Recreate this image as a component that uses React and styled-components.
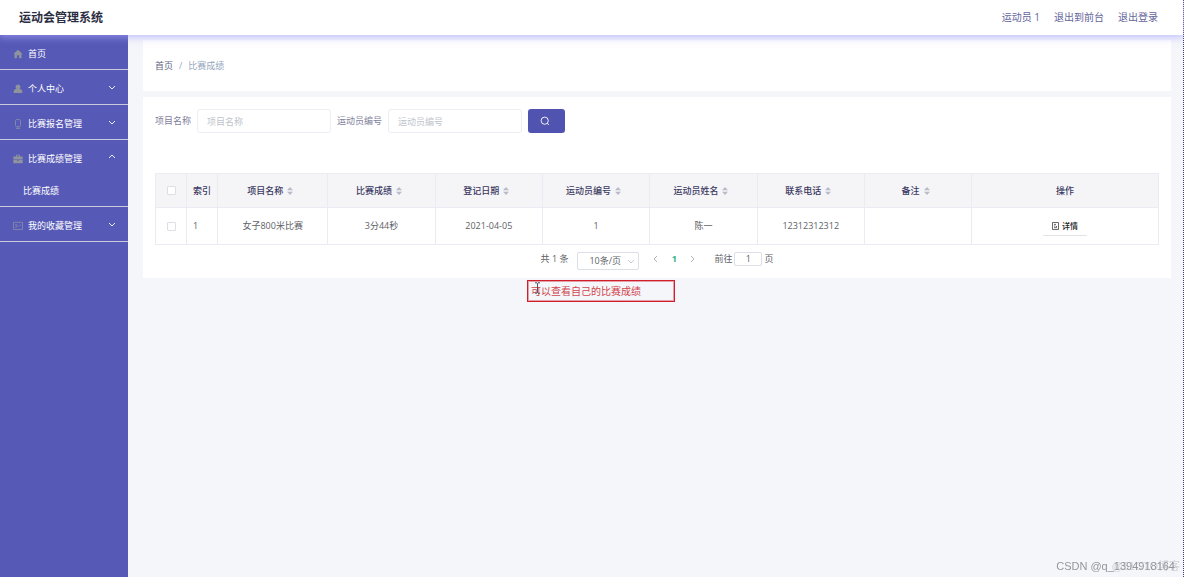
import React from 'react';
import styled, { createGlobalStyle } from 'styled-components';

const GlobalStyle = createGlobalStyle`
* {
box-sizing: border-box;
}
body {
margin: 0;
background: #f5f6fa;
}
body, button, input, select {
font-family: 'Open Sans', 'Noto Sans CJK SC', sans-serif;
font-size: 9px;
line-height: 16px;
color: #606266;
}
a {
color: inherit;
text-decoration: none;
}
`;
const StyledPage = styled.div`
display: flex;
flex-direction: column;
min-height: 100vh;
border-right: 1px dotted #3d3a78;
`;
const StyledHeader = styled.header`
position: relative;
z-index: 1;
display: flex;
align-items: center;
justify-content: space-between;
height: 35px;
padding: 0 25px 0 19px;
background: #fff;
box-shadow: 0 1px 8px 1px rgba(165, 165, 255, 0.7);
`;
const StyledTitle = styled.h1`
margin: 0;
font-size: 12px;
font-weight: 700;
color: #2b2d42;
`;
const StyledUserNav = styled.nav`
display: flex;
gap: 14px;
padding-bottom: 2px;
font-size: 10px;
color: #65659a;
`;
const StyledBody = styled.div`
display: flex;
flex: 1;
`;
const StyledSidebar = styled.aside`
flex: 0 0 128px;
background: #5659b6;
color: #fff;
`;
const StyledMenu = styled.ul`
margin: 0;
padding: 0;
list-style: none;
`;
const StyledMenuItem = styled.li`
border-bottom: 1px solid #c9cadb;
`;
const StyledMenuLink = styled.a`
display: flex;
align-items: center;
gap: 5px;
height: 34px;
padding: 3px 12px 0 13px;
`;
const StyledMenuLabel = styled.span`
flex: 1;
`;
const StyledMenuArrow = styled.span`
display: flex;
padding-bottom: 4px;
`;
const StyledSubLink = styled.a`
display: block;
height: 32px;
padding: 9px 0 7px 23px;
`;
const StyledMain = styled.main`
flex: 1;
min-width: 0;
padding: 5px 12px 0 15px;
`;
const StyledBreadcrumb = styled.nav`
display: flex;
align-items: center;
gap: 6px;
height: 51px;
padding: 0 12px;
background: #fff;
color: #97a8be;
`;
const StyledCrumb = styled.a`
color: #606280;
`;
const StyledCard = styled.section`
margin-top: 6px;
padding: 12px 12px 8px;
background: #fff;
`;
const StyledForm = styled.form`
display: flex;
align-items: center;
gap: 6px;
margin-bottom: 40px;
`;
const StyledLabel = styled.label`
display: flex;
align-items: center;
gap: 6px;
color: #7e809b;
`;
const StyledInput = styled.input`
width: 134px;
height: 24px;
padding: 0 9px;
border: 1px solid #eceef3;
border-radius: 3px;
outline: none;
&::placeholder {
color: #c0c4cc;
}
`;
const StyledSearchButton = styled.button`
display: flex;
align-items: center;
justify-content: center;
width: 37px;
height: 24px;
padding: 0 3px 0 0;
border: 0;
border-radius: 3px;
background: #5153b0;
color: #fff;
`;
const StyledTable = styled.table`
width: 100%;
table-layout: fixed;
border-collapse: collapse;
text-align: center;
`;
const StyledCol = styled.col`
width: ${({ width }) => width};
`;
const StyledTh = styled.th`
height: 34px;
padding: 0;
border: 1px solid #ebecf3;
background: #f5f5f8;
font-weight: 500;
color: #3b3961;
`;
const StyledTd = styled.td`
height: 37px;
padding: ${({ $index }) => ($index ? '0 0 0 6px' : '0')};
border: 1px solid #ebecf3;
text-align: ${({ $index }) => ($index ? 'left' : 'center')};
`;
const StyledHeadCell = styled.div`
display: flex;
align-items: center;
justify-content: center;
gap: 4px;
padding-right: 5px;
`;
const StyledCheckbox = styled.input`
appearance: none;
display: block;
width: 9px;
height: 9px;
margin: 0 auto;
border: 1px solid #dcdfe6;
border-radius: 1px;
background: #fff;
`;
const StyledDetailButton = styled.button`
display: inline-flex;
align-items: center;
gap: 3px;
height: 20px;
padding: 0 9px;
border: 0;
border-bottom: 1px solid #e4e4e8;
background: #fff;
font-size: 8px;
font-weight: 500;
color: #222;
`;
const StyledPagination = styled.div`
display: flex;
align-items: flex-start;
justify-content: center;
padding-top: 6px;
`;
const StyledSelectWrapper = styled.div`
position: relative;
margin: 1px 8px 0 9px;
`;
const StyledSelect = styled.select`
appearance: none;
display: block;
width: 62px;
height: 18px;
padding: 0 11px;
border: 1px solid #dcdfe6;
border-radius: 2px;
background: #fff;
`;
const StyledSelectArrow = styled.span`
position: absolute;
top: 5px;
right: 4px;
display: flex;
color: #c0c4cc;
pointer-events: none;
`;
const StyledPageButton = styled.button`
display: flex;
align-items: center;
justify-content: center;
width: 18px;
height: 16px;
padding: 0;
border: 0;
background: none;
font-weight: 700;
color: ${({ $active }) => ($active ? '#2fb186' : '#a8abb2')};
`;
const StyledJumper = styled.label`
display: flex;
align-items: center;
gap: 2px;
margin-left: 13px;
`;
const StyledPageInput = styled.input`
width: 28px;
height: 14px;
padding: 0;
border: 1px solid #dcdfe6;
border-radius: 2px;
text-align: center;
`;
const StyledNote = styled.p`
position: relative;
width: 148px;
margin: 2px 0 0 384px;
padding: 2px 3px;
border: 1px solid #cf1f2a;
outline: 1px solid rgba(207, 31, 42, 0.4);
outline-offset: -2px;
font-size: 10px;
line-height: 16px;
color: #d0454b;
`;
const StyledCursor = styled.svg`
position: absolute;
top: 1px;
left: 6px;
`;
const StyledWatermark = styled.div`
position: fixed;
right: 9px;
bottom: 3px;
font-family: 'Liberation Sans', 'Noto Sans CJK SC', sans-serif;
font-size: 11px;
color: #96979c;
`;
const StyledFaintMark = styled.span`
position: absolute;
top: 0;
right: -5px;
color: rgba(150, 150, 158, 0.4);
white-space: nowrap;
`;

const Chevron = ({ d = 'M1 3l3 3 3-3' }) => (
    <svg width="8" height="8" viewBox="0 0 8 8" fill="none" stroke="currentColor" strokeWidth="0.9">
        <path d={d} />
    </svg>
);

const SortIcon = () => (
    <svg width="6" height="8" viewBox="0 0 6 8" fill="#b9bcc8">
        <path d="M0 3.3L3 0l3 3.3zM0 4.7h6L3 8z" />
    </svg>
);

const SearchIcon = () => (
    <svg width="10" height="10" viewBox="0 0 10 10" fill="none" stroke="currentColor" strokeWidth="0.9">
        <circle cx="4.7" cy="4.7" r="3.6" />
        <path d="M7.2 7.2L9 9" />
    </svg>
);

const DocumentIcon = () => (
    <svg width="7" height="8" viewBox="0 0 7 8" fill="none" stroke="#444" strokeWidth="0.8">
        <path d="M.5.5h6v7h-6zM2 2.4h2M2 4h1.5M2 5.7h3M4 4l1 1" />
    </svg>
);

const menuIcons = {
    home: <path fill="#8f939c" d="M5 .7L.4 5h1.1v4.2h2.4V6.3h2.2v2.9h2.4V5h1.1z" />,
    user: <path fill="#8f939c" d="M5 .5a2.4 2.4 0 0 1 1.5 4.3c1.7.3 2.8 1.2 2.8 2.7v1.6H.7V7.5C.7 6 1.8 5.1 3.5 4.8A2.4 2.4 0 0 1 5 .5z" />,
    phone: <path fill="none" stroke="#8388a8" d="M3.5.6h3a1 1 0 0 1 1 1v5a1 1 0 0 1-1 1h-3a1 1 0 0 1-1-1v-5a1 1 0 0 1 1-1zM3 9.4h4M5 7.6v1.8" />,
    case: <path fill="#8f939c" fillRule="evenodd" d="M3 2.4V.7h4v1.7h2.7v3H.3v-3zM3.8 2.4h2.4v-.9H3.8zM.3 6h3.9v.8h1.6V6h3.9v3.2H.3z" />,
    card: <path fill="none" stroke="#8388a8" strokeWidth="0.9" d="M.5 1.3h9v7.2h-9zM2.3 3.5h1.5M2.3 5h3M2.3 6.5h1.2M6 5.5l2-2" />,
};

const menu = [
    { label: '首页', icon: 'home' },
    { label: '个人中心', icon: 'user', group: true },
    { label: '比赛报名管理', icon: 'phone', group: true },
    { label: '比赛成绩管理', icon: 'case', group: true, children: ['比赛成绩'] },
    { label: '我的收藏管理', icon: 'card', group: true },
];

const columns = ['项目名称', '比赛成绩', '登记日期', '运动员编号', '运动员姓名', '联系电话', '备注'];
const rows = [['女子800米比赛', '3分44秒', '2021-04-05', '1', '陈一', '12312312312', '']];

const App = () => {
    return (
        <StyledPage>
            <GlobalStyle />
            <StyledHeader>
                <StyledTitle>运动会管理系统</StyledTitle>
                <StyledUserNav>
                    <span>运动员 1</span>
                    <a href="#front">退出到前台</a>
                    <a href="#logout">退出登录</a>
                </StyledUserNav>
            </StyledHeader>
            <StyledBody>
                <StyledSidebar>
                    <StyledMenu>
                        {menu.map(({ label, icon, group, children }) => (
                            <StyledMenuItem key={label}>
                                <StyledMenuLink href="#menu">
                                    <svg width="10" height="10" viewBox="0 0 10 10">{menuIcons[icon]}</svg>
                                    <StyledMenuLabel>{label}</StyledMenuLabel>
                                    {group && (
                                        <StyledMenuArrow>
                                            <Chevron d={children ? 'M1 5l3-3 3 3' : undefined} />
                                        </StyledMenuArrow>
                                    )}
                                </StyledMenuLink>
                                {children && children.map((child) => (
                                    <StyledSubLink href="#score" key={child}>{child}</StyledSubLink>
                                ))}
                            </StyledMenuItem>
                        ))}
                    </StyledMenu>
                </StyledSidebar>
                <StyledMain>
                    <StyledBreadcrumb>
                        <StyledCrumb href="#home">首页</StyledCrumb>
                        <span>/</span>
                        <span>比赛成绩</span>
                    </StyledBreadcrumb>
                    <StyledCard>
                        <StyledForm>
                            <StyledLabel>
                                项目名称
                                <StyledInput type="text" placeholder="项目名称" />
                            </StyledLabel>
                            <StyledLabel>
                                运动员编号
                                <StyledInput type="text" placeholder="运动员编号" />
                            </StyledLabel>
                            <StyledSearchButton type="button" aria-label="查询">
                                <SearchIcon />
                            </StyledSearchButton>
                        </StyledForm>
                        <StyledTable>
                            <colgroup>
                                <StyledCol width="31px" />
                                <StyledCol width="31px" />
                                <StyledCol width="11%" />
                                {columns.slice(1).map((name) => (
                                    <StyledCol width="10.7%" key={name} />
                                ))}
                                <StyledCol width="auto" />
                            </colgroup>
                            <thead>
                                <tr>
                                    <StyledTh><StyledCheckbox type="checkbox" aria-label="全选" /></StyledTh>
                                    <StyledTh>索引</StyledTh>
                                    {columns.map((name) => (
                                        <StyledTh key={name}>
                                            <StyledHeadCell>
                                                {name}
                                                <SortIcon />
                                            </StyledHeadCell>
                                        </StyledTh>
                                    ))}
                                    <StyledTh>操作</StyledTh>
                                </tr>
                            </thead>
                            <tbody>
                                {rows.map((row, i) => (
                                    <tr key={row[0]}>
                                        <StyledTd><StyledCheckbox type="checkbox" aria-label="选择" /></StyledTd>
                                        <StyledTd $index>{i + 1}</StyledTd>
                                        {row.map((value, n) => (
                                            <StyledTd key={columns[n]}>{value}</StyledTd>
                                        ))}
                                        <StyledTd>
                                            <StyledDetailButton type="button">
                                                <DocumentIcon />
                                                详情
                                            </StyledDetailButton>
                                        </StyledTd>
                                    </tr>
                                ))}
                            </tbody>
                        </StyledTable>
                        <StyledPagination>
                            <span>共 1 条</span>
                            <StyledSelectWrapper>
                                <StyledSelect aria-label="每页条数">
                                    <option>10条/页</option>
                                </StyledSelect>
                                <StyledSelectArrow><Chevron /></StyledSelectArrow>
                            </StyledSelectWrapper>
                            <StyledPageButton type="button" aria-label="上一页"><Chevron d="M5 1L2 4l3 3" /></StyledPageButton>
                            <StyledPageButton type="button" $active>1</StyledPageButton>
                            <StyledPageButton type="button" aria-label="下一页"><Chevron d="M3 1l3 3-3 3" /></StyledPageButton>
                            <StyledJumper>
                                前往
                                <StyledPageInput type="text" defaultValue="1" />
                                页
                            </StyledJumper>
                        </StyledPagination>
                    </StyledCard>
                    <StyledNote>
                        可以查看自己的比赛成绩
                        <StyledCursor width="7" height="12" viewBox="0 0 7 12" fill="none" stroke="#444" strokeWidth="0.9">
                            <path d="M1 .8h2l.5.5.5-.5h2M3.5 1.3v9.4M1 11.2h2l.5-.5.5.5h2" />
                        </StyledCursor>
                    </StyledNote>
                </StyledMain>
            </StyledBody>
            <StyledWatermark>
                CSDN @q_1394918164
                <StyledFaintMark>@51CTO博客</StyledFaintMark>
            </StyledWatermark>
        </StyledPage>
    );
}

export default App;
